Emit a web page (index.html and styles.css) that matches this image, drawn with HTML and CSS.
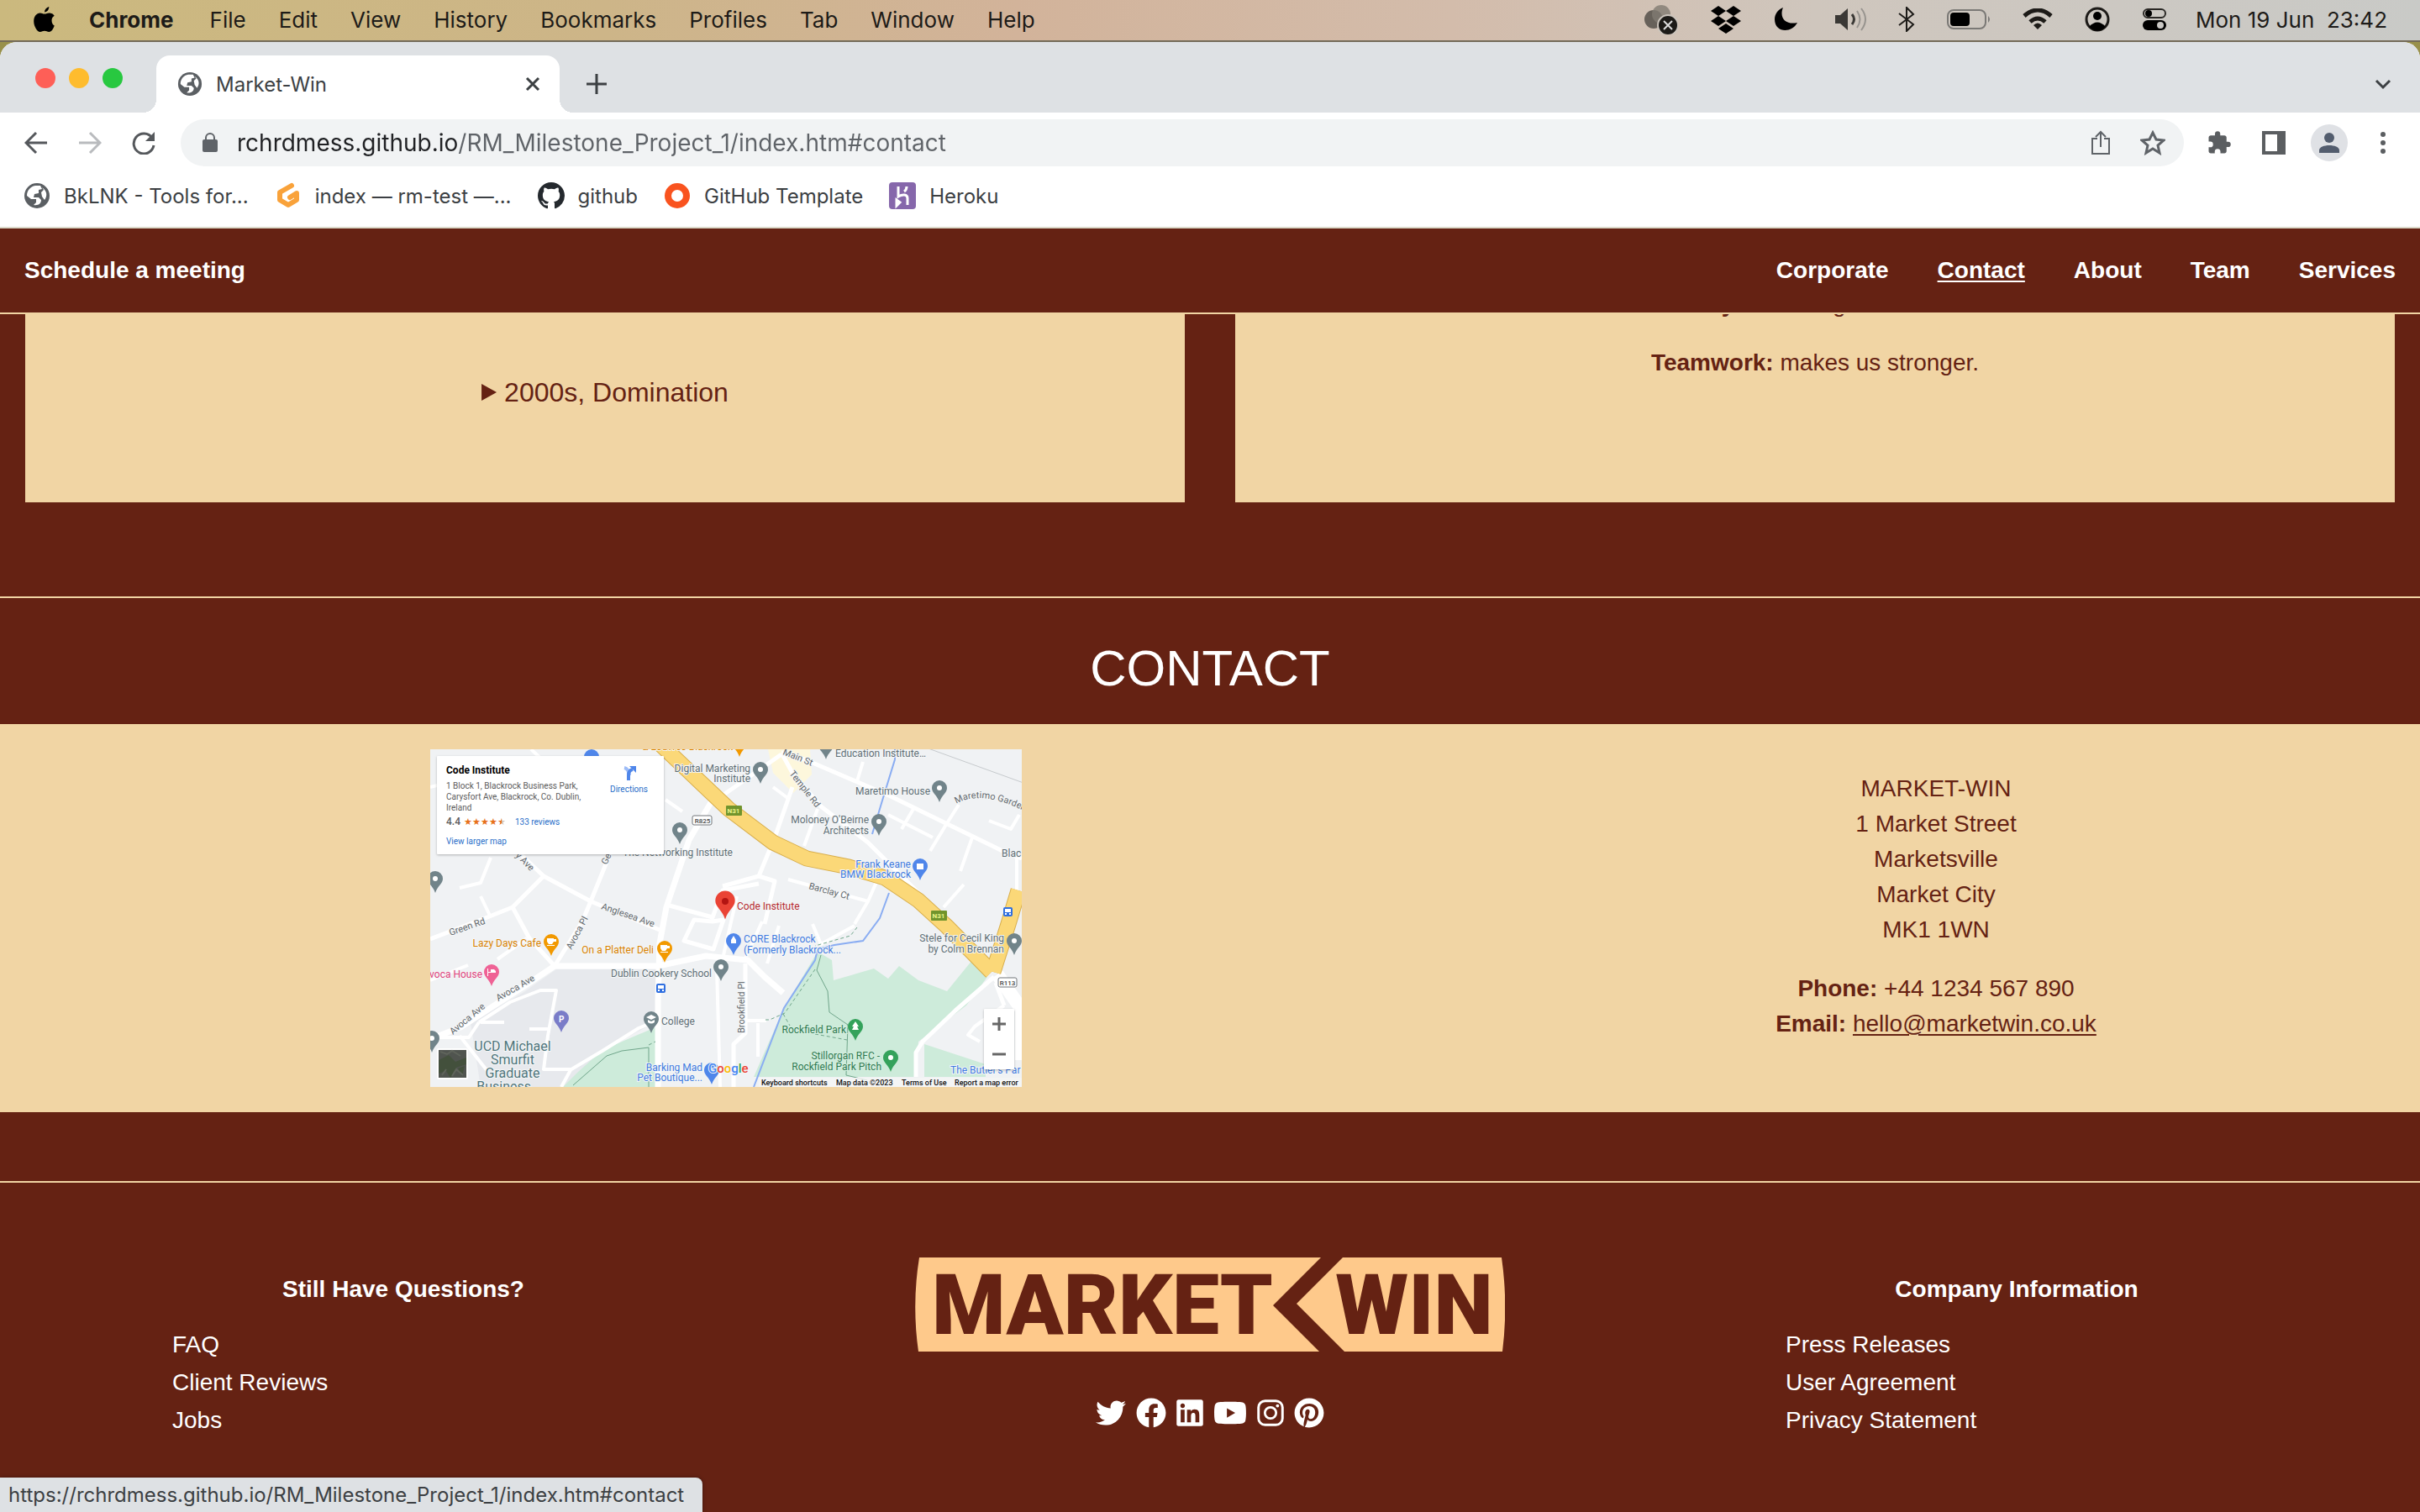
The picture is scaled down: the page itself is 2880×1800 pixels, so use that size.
FILE: index.html
```html
<!DOCTYPE html>
<html lang="en">
<head>
<meta charset="utf-8">
<title>Market-Win</title>
<link rel="stylesheet" href="styles.css">
</head>
<body>
<svg class="defs" aria-hidden="true">
  <symbol id="globe" viewBox="0 0 32 32"><circle cx="16" cy="16" r="15" fill="#5b5f63"/><path d="M14 4C8 5 4 10 4 16l5 4h6v4l-3 3c6 1 9-2 9-6l-3-3h-6l1-4 5-1v-4l4-1-2-4M22 6l2 3-3 3 1 5 3 4c3-4 4-10-3-15" fill="#fff"/></symbol>
  <symbol id="pin" viewBox="0 0 20 28" overflow="visible"><path d="M10 1a9 9 0 0 0-9 9c0 6 6 8 9 17 3-9 9-11 9-17a9 9 0 0 0-9-9z"/></symbol>
</svg>
<div class="desktop">
<header class="menubar">
  <svg class="apple" viewBox="0 0 24 30"><path d="M17 1c0 3-2 6-5 6 0-3 2-5 5-6zM20 16c0-3 2-4 3-5-2-3-5-3-6-3-2 0-3 1-5 1S9 8 7 8c-4 0-7 4-7 9 0 6 4 12 7 12 2 0 3-1 5-1s3 1 5 1c3 0 5-4 6-7-2-1-3-3-3-6z"/></svg>
  <nav class="menus"><b>Chrome</b><span>File</span><span>Edit</span><span>View</span><span>History</span><span>Bookmarks</span><span>Profiles</span><span>Tab</span><span>Window</span><span>Help</span></nav>
  <div class="status">
    <svg viewBox="0 0 40 36" width="40" height="36"><circle cx="11" cy="18" r="11" fill="#67615a"/><circle cx="20" cy="12" r="11" fill="#817a72" opacity=".8"/><circle cx="28" cy="25" r="12" fill="#1d1b18" stroke="#ccc5bd" stroke-width="2"/><path d="m23 20 10 10m0-10L23 30" stroke="#ddd" stroke-width="2"/></svg>
    <svg viewBox="0 0 38 34" width="38" height="34"><path d="m10 1 9 6-9 6-9-6zm18 0 9 6-9 6-9-6zM10 13l9 6-9 6-9-6zm18 0 9 6-9 6-9-6zm-9 9 9 6-9 6-9-6z"/></svg>
    <svg viewBox="0 0 28 28" width="28" height="28"><path d="M11 0C6 12 14 21 28 18 21 31 1 30 1 14 1 8 5 2 11 0z"/></svg>
    <svg class="volume" viewBox="0 0 38 28" width="38" height="28" fill="none" stroke-width="2"><path d="M1 9h6l9-8v26l-9-8H1z" fill="#3a3835"/><path d="M21 8q5 6 0 12" stroke="#3a3835" stroke-width="3"/><path d="M27 4q7 10 0 20M32 1q10 13 0 26" stroke="#98948f"/></svg>
    <svg viewBox="0 0 20 30" width="20" height="30" fill="none" stroke="#1d1b18" stroke-width="2"><path d="m1 8 17 13-8 8V1l8 8L1 22"/></svg>
    <svg viewBox="0 0 52 26" width="52" height="26"><rect x="1" y="2" width="45" height="22" rx="7" fill="none" stroke="#7b7976" stroke-width="2"/><rect x="4" y="5" width="23" height="16" rx="4"/><path d="M49 9q4 4 0 8" fill="#7b7976"/></svg>
    <svg viewBox="0 0 36 26" width="36" height="26" fill="none" stroke="#1d1b18" stroke-width="5"><path d="M2 9Q18-5 34 9M9 16q9-8 18 0"/><path d="m18 25-5-5q5-5 10 0z" fill="#1d1b18" stroke="none"/></svg>
    <svg viewBox="0 0 30 30" width="30" height="30"><circle cx="15" cy="15" r="13" fill="none" stroke="#1d1b18" stroke-width="3"/><circle cx="15" cy="11" r="5"/><path d="M5 24q10-11 20 0-10 9-20 0z"/></svg>
    <svg viewBox="0 0 30 28" width="30" height="28"><rect x="2" y="2" width="26" height="10" rx="5" fill="none" stroke="#2a2825" stroke-width="2"/><circle cx="8" cy="7" r="4"/><rect x="1" y="15" width="28" height="12" rx="6"/><circle cx="22" cy="21" r="4" fill="#cac8c5"/></svg>
    <time>Mon 19 Jun&nbsp; 23:42</time>
  </div>
</header>
<div class="window">
  <div class="tabstrip">
    <div class="lights"><i class="light red"></i><i class="light amber"></i><i class="light green"></i></div>
    <div class="tab"><svg class="fav"><use href="#globe"/></svg><span class="tab-title">Market-Win</span>
      <button class="plain" aria-label="Close tab"><svg width="18" height="18" viewBox="0 0 18 18"><path d="m2 2 14 14m0-14L2 16" stroke="#3c4043" stroke-width="3"/></svg></button></div>
    <button class="plain newtab" aria-label="New tab"><svg width="26" height="26" viewBox="0 0 26 26"><path d="M13 1v24M1 13h24" stroke="#3c4043" stroke-width="3"/></svg></button>
    <button class="plain tabsearch" aria-label="Search tabs"><svg width="20" height="14" viewBox="0 0 20 14"><path d="m2 3 8 8 8-8" fill="none" stroke="#3c4043" stroke-width="3"/></svg></button>
  </div>
  <div class="toolbar">
    <button class="plain" aria-label="Back"><svg width="28" height="28" viewBox="0 0 28 28"><path d="M27 14H2M14 2 2 14l12 12" fill="none" stroke="#55585c" stroke-width="3"/></svg></button>
    <button class="plain" aria-label="Forward"><svg width="28" height="28" viewBox="0 0 28 28"><path d="M1 14h25M14 2l12 12-12 12" fill="none" stroke="#b9bbbe" stroke-width="3"/></svg></button>
    <button class="plain" aria-label="Reload"><svg width="28" height="28" viewBox="0 0 28 28"><path d="M24 8a12 12 0 1 0 2 9" fill="none" stroke="#55585c" stroke-width="3"/><path d="M27 1v11H16z" fill="#55585c"/></svg></button>
    <div class="omnibox">
      <svg width="18" height="24" viewBox="0 0 18 24"><path d="M4 9V6a5 5 0 0 1 10 0v3" fill="none" stroke="#5f6368" stroke-width="2"/><rect y="8" width="18" height="15" rx="2" fill="#5f6368"/></svg>
      <input class="url" aria-label="Address" value="rchrdmess.github.io/RM_Milestone_Project_1/index.htm#contact">
      <button class="plain" aria-label="Share"><svg width="24" height="30" viewBox="0 0 24 30"><path d="M8 10H2v18h20V10h-6M12 20V3M6 8l6-6 6 6" fill="none" stroke="#5f6368" stroke-width="2"/></svg></button>
      <button class="plain" aria-label="Bookmark"><svg width="30" height="30" viewBox="0 0 30 30"><path d="m15 3 4 8 9 1-7 6 2 9-8-5-8 5 2-9-7-6 9-1z" fill="none" stroke="#5f6368" stroke-width="3"/></svg></button>
    </div>
    <button class="plain" aria-label="Extensions"><svg width="30" height="30" viewBox="0 0 24 24"><path d="M20.500 11H19V7c0-1.100-.9-2-2-2h-4V3.500a2.500 2.500 0 0 0-5 0V5H4c-1.100 0-2 .9-2 2v3.800h1.500a2.700 2.700 0 0 1 0 5.400H2V20c0 1.100.9 2 2 2h3.800v-1.500a2.700 2.700 0 0 1 5.400 0V22H17c1.100 0 2-.9 2-2v-4h1.500a2.500 2.500 0 0 0 0-5z" fill="#5b5e61"/></svg></button>
    <button class="plain" aria-label="Side panel"><svg width="28" height="28" viewBox="0 0 28 28"><path d="M0 0h28v28H0zM4 4v20h14V4z" fill="#5b5e61" fill-rule="evenodd"/></svg></button>
    <button class="plain avatar" aria-label="Profile"><svg width="24" height="26" viewBox="0 0 24 26"><circle cx="12" cy="7" r="6" fill="#535d6e"/><path d="M0 25v-3c0-8 24-8 24 0v3z" fill="#535d6e"/></svg></button>
    <button class="plain" aria-label="Menu"><svg width="6" height="28" viewBox="0 0 6 28" fill="#5b5e61"><circle cx="3" cy="4" r="3"/><circle cx="3" cy="14" r="3"/><circle cx="3" cy="24" r="3"/></svg></button>
  </div>
  <nav class="bookmarks">
    <a href="#b1"><svg><use href="#globe"/></svg>BkLNK - Tools for...</a>
    <a href="#b2"><svg viewBox="0 0 32 32"><path d="m20 4-14 8v9l10 6 10-6v-8l-8 5" fill="none" stroke="#f9a23a" stroke-width="6" stroke-linejoin="round" stroke-linecap="round"/></svg>index — rm-test —...</a>
    <a href="#b3"><svg viewBox="0 0 16 16"><path fill="#24292e" d="M8 0C3.580 0 0 3.580 0 8c0 3.540 2.290 6.530 5.470 7.590.4.070.55-.17.55-.38 0-.19-.01-.82-.01-1.490-2.010.37-2.530-.49-2.690-.94-.09-.23-.48-.94-.82-1.130-.28-.15-.68-.52-.01-.53.63-.01 1.080.58 1.230.82.72 1.210 1.870.87 2.330.66.070-.52.28-.87.51-1.070-1.780-.2-3.640-.89-3.640-3.950 0-.87.31-1.590.82-2.150-.08-.2-.36-1.020.08-2.120 0 0 .67-.21 2.200.82a7.600 7.600 0 0 1 4 0c1.530-1.040 2.200-.82 2.200-.82.44 1.100.16 1.920.08 2.120.51.56.82 1.270.82 2.150 0 3.070-1.870 3.750-3.650 3.950.29.25.54.73.54 1.480 0 1.070-.01 1.930-.01 2.200 0 .21.15.46.55.38A8 8 0 0 0 16 8c0-4.420-3.580-8-8-8z"/></svg>github</a>
    <a href="#b4"><svg viewBox="0 0 32 32"><circle cx="16" cy="16" r="11" fill="none" stroke="#f9531f" stroke-width="8"/></svg>GitHub Template</a>
    <a href="#b5"><svg viewBox="0 0 32 32"><rect width="32" height="32" rx="4" fill="#8667ab"/><path d="M11 5v12c5-3 11-3 11 2v8M21 5q0 4-3 6M9 21v7l4-4z" fill="none" stroke="#fff" stroke-width="3"/></svg>Heroku</a>
  </nav>
  <div class="page">
    <header class="site-nav">
      <a href="#meeting">Schedule a meeting</a>
      <nav><a href="#corporate">Corporate</a><a href="#contact" class="active">Contact</a><a href="#about">About</a><a href="#team">Team</a><a href="#services">Services</a></nav>
    </header>
    <section class="cards">
      <div class="card history"><details><summary>2000s, Domination</summary></details></div>
      <div class="card values"><p><b>Honesty:</b> creates great relations.</p><p><b>Teamwork:</b> makes us stronger.</p></div>
    </section>
    <section class="contact" id="contact">
      <h1>CONTACT</h1>
      <div class="contact-body">
        <div class="map">
<svg class="map-canvas" viewBox="0 0 704 402">
<rect width="704" height="402" fill="#f0f2f4"/>
<path d="M402 0h50l2 30-22 22-24-24z" fill="#fdf7dc"/>
<path d="M48 325l62-35 40-28h121l-3 63-63 33-40 44H60z" fill="#e7e9ed"/>
<path d="M461 241l17 10 2 24 48-14 17 12 13-15 23 17 34 13 30-37 18 20-25 34-57 43-3 42H385l36-82zM588 351l73 24v15h-73zM268 331v71H158l17-17 30-27z" fill="#cdebda"/>
<g fill="none" stroke="#fff" stroke-linejoin="round">
<g stroke-width="7"><path d="M336 60 308 108 281 188 273 231 271 298V402M0 345l36-14 85-55 27-18h123l57-12 50 5 20 20 22 19"/><path d="M675 268l29 42v60" stroke-width="16"/></g>
<g stroke-width="5"><path d="M0 226l68-26 30-12 37-37-40-38M135 151l56 30 82 34M215 122l-24 59-10 24-33 53-30-33-20-37M345 57l73-51M418 4l30 9 100 43 133 65 23 9M420 8l11 20 34 40 56 43 60 60M431 45 410 105 391 151 410 157 398 208M391 151l-43 12M281 185l55 15 12-32 43-8M671 271l-46 40-39 37-8 13v29M673 278l10 27M375 255v83l-14 13v51M336 205l-22-2-12 25 35 10 12-35z"/></g>
<g stroke-width="4"><path d="M629 66 615 88 595 121M645 105l-14 40M575 71l-14 24M545 78l53 27M461 71l-16 44M515 15l-7 23M701 78l-10 17-26-10M426 155l95 26 10-23M521 181l-16 27M635 161l-24 27M698 121v47M341 261l4 141M0 275l45-18M80 250l35-25M35 165l25-6 12-30M60 175l12 25M365 175l-16 70M395 205l-20 44M415 210l-14 45M455 208l10 24 40-22M58 325l37-24 36-14h19l-10 54-5 40h33l37-22 43-27 20-8M168 380l-12 22M58 325l-12 18H8M35 341l33 42M118 333h25M60 325h28M375 323h25M390 326v40M683 305l-35 25-8 10 14 8M120 0l16 15M170 15l70 35M0 45l20-5M280 60l20 14M408 45l20 15"/></g>
</g>
<g fill="none"><path d="M274-6 335 52 355 71 408 111 448 130 498 140 541 153 581 180 615 211 668 265M700 168l-12 40-18 57" stroke="#d8ae4c" stroke-width="19"/><path d="M274-6 335 52 355 71 408 111 448 130 498 140 541 153 581 180 615 211 668 265M700 168l-12 40-18 57" stroke="#fbd878" stroke-width="17"/>
<path d="M553 0v12l-15 49-12 40M546 171l-11 30-20 27-34 5-20 5-3 13-37 57-36 94" stroke="#8aadf2" stroke-width="2"/>
<path d="M465 245l-5 18 13 25 2 25 22 15-2 60 25 6M170 400l40-35 18-6 32-4v47" stroke="#6fa58a"/><path d="M508 212l-8 10-42 12M458 262l-36 52-18 8h-8M420 315l8 14M458 339l38 7M260 352l8-4" stroke="#6fa58a" stroke-dasharray="4 3"/><path d="M590-2l116 42" stroke="#c6cacd"/></g>
<g fill="#71848a"><use href="#pin" x="287" y="86" width="20" height="28"/><use href="#pin" x="-4" y="144" width="20" height="28"/><use href="#pin" x="383" y="14" width="20" height="28"/><use href="#pin" x="461" y="-15" width="20" height="28"/><use href="#pin" x="596" y="36" width="20" height="28"/><use href="#pin" x="524" y="76" width="20" height="28"/><use href="#pin" x="336" y="249" width="20" height="28"/><use href="#pin" x="253" y="311" width="20" height="28"/><use href="#pin" x="-8" y="334" width="20" height="28"/><use href="#pin" x="685" y="218" width="20" height="28"/></g>
<g fill="#4f86ea"><use href="#pin" x="573" y="129" width="20" height="28"/><use href="#pin" x="351" y="218" width="20" height="28"/><use href="#pin" x="325" y="372" width="20" height="28"/><circle cx="192" cy="9" r="9"/></g>
<g fill="#f29900"><use href="#pin" x="134" y="219" width="20" height="28"/><use href="#pin" x="269" y="227" width="20" height="28"/><use href="#pin" x="358" y="-18" width="20" height="28"/></g>
<use href="#pin" x="63" y="255" width="20" height="28" fill="#ef6295"/><use href="#pin" x="146" y="310" width="20" height="28" fill="#7a7cc8"/>
<g fill="#34a25b"><use href="#pin" x="496" y="320" width="20" height="28"/><use href="#pin" x="538" y="357" width="20" height="28"/></g>
<use href="#pin" x="338" y="167" width="26" height="37" fill="#ea4335"/><circle cx="351" cy="181" r="4" fill="#b31412"/>
<g fill="#fff"><circle cx="297" cy="96" r="3"/><circle cx="6" cy="154" r="3"/><circle cx="393" cy="24" r="3"/><circle cx="606" cy="46" r="3"/><circle cx="534" cy="86" r="3"/><circle cx="346" cy="259" r="3"/><circle cx="2" cy="344" r="3"/><circle cx="695" cy="228" r="3"/><circle cx="548" cy="367" r="3"/>
<path d="M139 225h8v1h3v3h-3l-2 3h-4l-2-3zM139 233h9v1h-9zM274 233h8v1h3v3h-3l-2 3h-4l-2-3zM274 241h9v1h-9zM68 261h1v5h9v-2l-2-2h-4v3h-3v5h-1zM257 319l6-3 6 3-6 3zM259 322l4 2 4-2v3q-4 3-8 0zM506 324l4 6h-2l2 4h-8l2-4h-2zM579 136h8v7h-8zM358 227l3-5 3 5v4h-6z"/></g>
<text x="153" y="325" class="pin-p">P</text>
<g class="badge-b"><rect x="682" y="188" width="11" height="11" rx="2"/><rect x="269" y="279" width="11" height="11" rx="2"/><path d="M684 190h7v4h-7zM684 195h2v2h-2zM689 195h2v2h-2zM271 281h7v4h-7zM271 286h2v2h-2zM276 286h2v2h-2z" fill="#fff"/></g>
<g fill="#71942c"><rect x="352" y="67" width="19" height="12" rx="1"/><rect x="596" y="192" width="19" height="12" rx="1"/></g>
<g class="n31" text-anchor="middle"><text x="361" y="76">N31</text><text x="605" y="201">N31</text></g>
<g fill="#fff" stroke="#72777b"><rect x="312" y="79" width="23" height="11" rx="2"/><rect x="676" y="272" width="22" height="11" rx="2"/></g>
<g class="route" text-anchor="middle"><text x="324" y="88">R825</text><text x="687" y="281">R113</text></g>
<g class="lbl">
<g class="street"><text transform="translate(419 6) rotate(22)">Main St</text><text transform="translate(427 29) rotate(52)">Temple Rd</text><text transform="translate(203 190) rotate(19)">Anglesea Ave</text><text transform="translate(210 138) rotate(-65)">Ge</text><text transform="translate(101 127) rotate(45)">y Ave</text><text transform="translate(24 222) rotate(-19)">Green Rd</text><text transform="translate(168 239) rotate(-62)">Avoca Pl</text><text transform="translate(81 300) rotate(-30)">Avoca Ave</text><text transform="translate(27 340) rotate(-40)">Avoca Ave</text><text transform="translate(450 166) rotate(15)">Barclay Ct</text><text transform="translate(374 338) rotate(-90)">Brookfield Pl</text><path id="garden" d="M626 65Q656 47 712 76" fill="none"/><text><textPath href="#garden">Maretimo Garden</textPath></text></g>
<g class="gray"><g text-anchor="end"><text x="381" y="27">Digital Marketing</text><text x="381" y="39">Institute</text><text x="595" y="54">Maretimo House</text><text x="522" y="88">Moloney O'Beirne</text><text x="522" y="101">Architects</text><text x="335" y="271">Dublin Cookery School</text><text x="683" y="229">Stele for Cecil King</text><text x="683" y="242">by Colm Brennan</text></g><text x="482" y="9">Education Institute…</text><text x="680" y="128">Blac</text><text x="229" y="127">The Networking Institute</text><text x="275" y="328">College</text></g>
<g class="blue"><text x="572" y="141" text-anchor="end">Frank Keane</text><text x="572" y="153" text-anchor="end">BMW Blackrock</text><text x="373" y="230">CORE Blackrock</text><text x="373" y="243">(Formerly Blackrock...</text><text x="324" y="383" text-anchor="end">Barking Mad</text><text x="324" y="395" text-anchor="end">Pet Boutique...</text><text x="619" y="386">The Butler's Par</text></g>
<g class="orange"><text x="132" y="235" text-anchor="end">Lazy Days Cafe</text><text x="266" y="243" text-anchor="end">On a Platter Deli</text><text x="252" y="1">&amp; Louvres Blackrock</text></g>
<text x="62" y="272" text-anchor="end" fill="#e0437c">Avoca House</text>
<text x="365" y="191" fill="#b5282d">Code Institute</text>
<g class="green" text-anchor="end"><text x="495" y="338">Rockfield Park</text><text x="535" y="369">Stillorgan RFC -</text><text x="537" y="382">Rockfield Park Pitch</text></g>
<g class="ucd" text-anchor="middle"><text x="98" y="359">UCD Michael</text><text x="98" y="375">Smurfit</text><text x="98" y="391">Graduate</text><text x="94" y="407">Business...</text></g>
<text x="331" y="385" class="glogo"><tspan fill="#4285f4">G</tspan><tspan fill="#ea4335">o</tspan><tspan fill="#fbbc05">o</tspan><tspan fill="#4285f4">g</tspan><tspan fill="#34a853">l</tspan><tspan fill="#ea4335">e</tspan></text>
</g>
<path d="M391 391h313v11H391z" fill="#f5f5f5" opacity=".8"/>
<g class="legal"><text x="394" y="400">Keyboard shortcuts</text><text x="483" y="400">Map data ©2023</text><text x="561" y="400">Terms of Use</text><text x="624" y="400">Report a map error</text></g>
<g><rect x="8" y="356" width="37" height="37" rx="2" fill="#fff"/><path d="M10 358h33v33H10z" fill="#50544f"/><path d="M10 370l12-6 8 8 13-5v8l-12 4-7 12-5-8-9 3zM33 380l8-3-3 12z" fill="#43503c"/><path d="M12 360l8 3 6-4 10 6M14 388l5-7M26 389l5-8 8 7" stroke="#5f645b" stroke-width="2" fill="none"/></g>
</svg>
          <div class="place">
            <div class="place-info"><b>Code Institute</b><p>1 Block 1, Blackrock Business Park, Carysfort Ave, Blackrock, Co. Dublin, Ireland</p>
            <div class="rating"><strong>4.4</strong><span class="stars">★★★★<span class="half">★</span></span><a href="#reviews">133 reviews</a></div>
            <a href="#larger">View larger map</a></div>
            <a class="directions" href="#directions"><svg width="18" height="18" viewBox="0 0 18 18"><path d="M3 3q5 1 6 9" stroke="#9dbcf7" stroke-width="4" fill="none"/><path d="M8 18v-6q0-6 5-7" fill="none" stroke="#4f86ea" stroke-width="4"/><path d="M9 1h8v8z" fill="#4f86ea"/></svg>Directions</a>
          </div>
          <div class="zoom"><button aria-label="Zoom in"><svg width="16" height="16" viewBox="0 0 16 16"><path d="M8 0v16M0 8h16" stroke="#666" stroke-width="3"/></svg></button><button aria-label="Zoom out"><svg width="16" height="16" viewBox="0 0 16 16"><path d="M0 8h16" stroke="#666" stroke-width="3"/></svg></button></div>
        </div>
        <address>
          <p>MARKET-WIN<br>1 Market Street<br>Marketsville<br>Market City<br>MK1 1WN</p>
          <p><b>Phone:</b> +44 1234 567 890<br><b>Email:</b> <a href="mailto:hello@marketwin.co.uk">hello@marketwin.co.uk</a></p>
        </address>
      </div>
    </section>
    <footer class="footer">
      <div class="links"><h2>Still Have Questions?</h2><ul><li><a href="#faq">FAQ</a></li><li><a href="#reviews">Client Reviews</a></li><li><a href="#jobs">Jobs</a></li></ul></div>
      <div class="brand">
        <svg class="logo" width="702" height="112" viewBox="0 0 702 112"><path d="M5 0H483L426 57 481 112H4Q-4 56 5 0zM509 0H698Q706 56 699 112H511L454 55z" fill="#fec98b"/><text x="223" y="91" text-anchor="middle">MARKET</text><text x="594" y="91" text-anchor="middle">WIN</text></svg>
        <div class="social">
          <a href="#tw" aria-label="Twitter"><svg width="36" height="36" viewBox="0 0 512 512"><path d="M459.370 151.716c.325 4.548.325 9.097.325 13.645 0 138.720-105.583 298.558-298.558 298.558-59.452 0-114.680-17.219-161.137-47.106 8.447.974 16.568 1.299 25.340 1.299 49.055 0 94.213-16.568 130.274-44.832-46.132-.975-84.792-31.188-98.112-72.772 6.498.974 12.995 1.624 19.818 1.624 9.421 0 18.843-1.300 27.614-3.573-48.081-9.747-84.143-51.980-84.143-102.985v-1.299c13.969 7.797 30.214 12.670 47.431 13.319-28.264-18.843-46.781-51.005-46.781-87.391 0-19.492 5.197-37.360 14.294-52.954 51.655 63.675 129.300 105.258 216.365 109.807-1.624-7.797-2.599-15.918-2.599-24.040 0-57.828 46.782-104.934 104.934-104.934 30.213 0 57.502 12.670 76.670 33.137 23.715-4.548 46.456-13.320 66.599-25.340-7.798 24.366-24.366 44.833-46.132 57.827 21.117-2.273 41.584-8.122 60.426-16.243-14.292 20.791-32.161 39.308-52.628 54.253z"/></svg></a>
          <a href="#fb" aria-label="Facebook"><svg width="36" height="36" viewBox="0 0 512 512"><path d="M504 256C504 119 393 8 256 8S8 119 8 256c0 123.780 90.690 226.380 209.250 245V327.690h-63V256h63v-54.640c0-62.150 37-96.480 93.670-96.480 27.140 0 55.520 4.840 55.520 4.840v61h-31.280c-30.800 0-40.410 19.120-40.410 38.730V256h68.780l-11 71.690h-57.780V501C413.310 482.380 504 379.780 504 256z"/></svg></a>
          <a href="#li" aria-label="LinkedIn"><svg width="32" height="36" viewBox="0 0 448 512"><path d="M416 32H31.900C14.300 32 0 46.500 0 64.300v383.400C0 465.500 14.300 480 31.900 480H416c17.600 0 32-14.500 32-32.300V64.300c0-17.800-14.400-32.300-32-32.300zM135.400 416H69V202.200h66.500V416zm-33.200-243c-21.300 0-38.500-17.300-38.500-38.500S80.900 96 102.200 96c21.200 0 38.500 17.300 38.500 38.500 0 21.300-17.200 38.500-38.500 38.500zm282.100 243h-66.400V312c0-24.800-.5-56.700-34.500-56.700-34.600 0-39.900 27-39.900 54.900V416h-66.400V202.200h63.700v29.200h.9c8.900-16.800 30.600-34.500 62.900-34.500 67.200 0 79.700 44.300 79.700 101.900V416z"/></svg></a>
          <a href="#yt" aria-label="YouTube"><svg width="40" height="36" viewBox="0 0 576 512"><path d="M549.655 124.083c-6.281-23.650-24.787-42.276-48.284-48.597C458.781 64 288 64 288 64S117.220 64 74.629 75.486c-23.497 6.322-42.003 24.947-48.284 48.597-11.412 42.867-11.412 132.305-11.412 132.305s0 89.438 11.412 132.305c6.281 23.650 24.787 41.500 48.284 47.821C117.220 448 288 448 288 448s170.780 0 213.371-11.486c23.497-6.321 42.003-24.171 48.284-47.821 11.412-42.867 11.412-132.305 11.412-132.305s0-89.438-11.412-132.305zm-317.510 213.508V175.185l142.739 81.205-142.739 81.201z"/></svg></a>
          <a href="#ig" aria-label="Instagram"><svg width="32" height="36" viewBox="0 0 448 512"><rect x="21" y="53" width="406" height="406" rx="112" fill="none" stroke="#fff" stroke-width="42"/><circle cx="224" cy="256" r="95" fill="none" stroke="#fff" stroke-width="40"/><circle cx="343" cy="136" r="27"/></svg></a>
          <a href="#pi" aria-label="Pinterest"><svg width="36" height="36" viewBox="0 0 496 512"><path d="M496 256c0 137-111 248-248 248-25.600 0-50.200-3.900-73.400-11.100 10.100-16.500 25.200-43.500 30.800-65 3-11.600 15.400-59 15.400-59 8.100 15.400 31.700 28.500 56.800 28.500 74.800 0 128.700-68.800 128.700-154.300 0-81.900-66.900-143.200-152.900-143.200-107 0-163.900 71.800-163.900 150.100 0 36.400 19.400 81.700 50.300 96.100 4.700 2.200 7.200 1.200 8.300-3.300.8-3.400 5-20.300 6.900-28.100.6-2.500.3-4.700-1.700-7.100-10.100-12.500-18.300-35.300-18.300-56.600 0-54.700 41.400-107.600 112-107.600 60.900 0 103.600 41.500 103.600 100.900 0 67.100-33.900 113.600-78 113.600-24.300 0-42.600-20.100-36.700-44.800 7-29.500 20.500-61.300 20.500-82.600 0-19-10.200-34.900-31.400-34.900-24.900 0-44.900 25.700-44.900 60.200 0 22 7.400 36.800 7.400 36.800s-24.500 103.800-29 123.200c-5 21.400-3 51.600-.9 71.200C65.400 450.900 0 361.100 0 256 0 119 111 8 248 8s248 111 248 248z"/></svg></a>
        </div>
      </div>
      <div class="links"><h2>Company Information</h2><ul><li><a href="#press">Press Releases</a></li><li><a href="#user">User Agreement</a></li><li><a href="#privacy">Privacy Statement</a></li></ul></div>
    </footer>
  </div>
  <div class="link-status">https://rchrdmess.github.io/RM_Milestone_Project_1/index.htm#contact</div>
</div>
</div>
</body>
</html>
```
FILE: styles.css
```css
* { box-sizing: border-box; }
body { margin: 0; font-family: Inter, sans-serif; color: #1d1b18; }
h1, h2, p, ul { margin: 0; padding: 0; }
ul { list-style: none; }
svg { display: block; flex: none; }
a { color: inherit; text-decoration: none; }
.defs { position: absolute; width: 0; height: 0; }
.plain { border: 0; padding: 0; background: none; display: flex; align-items: center; justify-content: center; }

.desktop { height: 100vh; display: flex; flex-direction: column; overflow: hidden; background: #98904a; }
.menubar { height: 50px; flex: none; display: flex; align-items: center; padding: 0 39px 2px; border-bottom: 2px solid #736a58; background: linear-gradient(90deg, #cbb97e 0%, #cdb588 25%, #d2b39a 42%, #d3bcab 60%, #cfc6bd 75%, #c9cac7 100%); font-size: 26px; }
.apple { width: 28px; height: 32px; margin-right: 39px; }
.menus { display: flex; gap: 39px; }
.menus b { margin-right: 4px; }
.status { margin-left: auto; display: flex; align-items: center; gap: 38px; }
.status .volume { margin-left: 6px; }
.status time { margin-left: -4px; }

.window { flex: 1; min-height: 0; display: flex; flex-direction: column; position: relative; border-radius: 20px 20px 0 0; overflow: hidden; background: #fff; }
.tabstrip { height: 84px; flex: none; display: flex; align-items: center; background: #dee1e4; padding: 16px 34px 0 42px; }
.lights { display: flex; gap: 16px; width: 144px; padding-bottom: 14px; }
.light { width: 24px; height: 24px; border-radius: 50%; }
.red { background: #fe5f57; }
.amber { background: #febc2e; }
.green { background: #28c840; }
.tab { position: relative; width: 480px; height: 68px; background: #fff; border-radius: 16px 16px 0 0; display: flex; align-items: center; gap: 16px; padding: 0 23px 0 25px; font-size: 24px; color: #3c4043; }
.tab::before, .tab::after { content: ""; position: absolute; bottom: 0; width: 16px; height: 16px; }
.tab::before { left: -16px; background: radial-gradient(circle at 0 0, transparent 16px, #fff 16px); }
.tab::after { right: -16px; background: radial-gradient(circle at 100% 0, transparent 16px, #fff 16px); }
.fav { width: 30px; height: 30px; }
.tab-title { flex: 1; }
.newtab { margin-left: 31px; }
.tabsearch { margin-left: auto; }

.toolbar { height: 72px; flex: none; display: flex; align-items: center; gap: 36px; padding: 0 41px 0 29px; }
.omnibox { flex: 1; height: 56px; margin-left: -6px; margin-right: -9px; border-radius: 28px; background: #f1f3f4; display: flex; align-items: center; gap: 35px; padding: 0 22px 0 26px; }
.url { flex: 1; border: 0; padding: 0; margin-left: -12px; font: 28px Inter, sans-serif; outline: 0; color: transparent; background: linear-gradient(90deg, #202124 264px, #5f6368 264px); background-clip: text; -webkit-background-clip: text; }
.avatar { width: 44px; height: 44px; border-radius: 50%; background: #dfe1e5; margin: 0 3px 0 -6px; }
.bookmarks { height: 66px; flex: none; display: flex; align-items: center; gap: 31px; padding: 0 28px 10px; border-bottom: 2px solid #dcdacb; font-size: 24px; color: #3c4043; }
.bookmarks a { display: flex; align-items: center; gap: 16px; }
.bookmarks svg { width: 32px; height: 32px; }

.page { flex: 1; min-height: 0; background: #652213; color: #fff; font: 28px/42px "Liberation Sans", sans-serif; overflow: hidden; }
.site-nav { height: 102px; display: flex; align-items: center; justify-content: space-between; padding: 0 29px; border-bottom: 2px solid #f1d5a4; font-weight: bold; }
.site-nav nav { display: flex; gap: 58px; }
.active { text-decoration: underline; text-underline-offset: 3px; text-decoration-thickness: 2px; }
.cards { display: grid; grid-template-columns: 1fr 1fr; gap: 60px; padding: 0 30px; height: 224px; }
.card { background: #f1d5a4; color: #652213; display: flex; flex-direction: column; justify-content: flex-end; align-items: center; overflow: hidden; }
.history { padding-bottom: 107px; font-size: 32px; line-height: 48px; }
.history summary { display: flex; align-items: center; gap: 9px; list-style: none; }
.history summary::before { content: ""; width: 18px; height: 20px; background: #652213; clip-path: polygon(0 0, 100% 50%, 0 100%); }
.values { padding-bottom: 145px; gap: 28px; }
.contact { margin-top: 112px; border-top: 2px solid #f1d5a4; }
.contact h1 { padding: 48px 0 30px; font-size: 60px; line-height: 72px; font-weight: normal; text-align: center; }
.contact-body { display: grid; grid-template-columns: 3fr 2fr; background: #f1d5a4; color: #652213; padding: 30px 0; }
address { font-style: normal; text-align: center; padding-top: 26px; display: flex; flex-direction: column; gap: 28px; }
address a { text-decoration: underline; text-underline-offset: 3px; text-decoration-thickness: 2px; }

.map { position: relative; width: 704px; height: 402px; justify-self: center; overflow: hidden; font-family: Roboto, sans-serif; }
.map-canvas { width: 100%; height: 100%; }
.lbl text { font-size: 12px; paint-order: stroke; stroke: #f4f6f7; stroke-width: 2px; }
.gray { fill: #5f6f76; }
.street { fill: #62686c; }
.lbl .street text { font-size: 11px; }
.blue { fill: #3f7be0; }
.orange { fill: #d98200; }
.green text { fill: #2f7a50; }
.lbl .green text { stroke: #d5efe0; }
.ucd { fill: #4f757c; }
.lbl .ucd text { font-size: 16px; }
.lbl .glogo { font-size: 15px; font-weight: 500; }
.legal { font-size: 9px; font-weight: 500; fill: #111; }
.n31 { font-size: 8px; font-weight: 700; fill: #eaf58a; }
.route { font-size: 8px; font-weight: 500; fill: #444; }
.pin-p { font-size: 10px; font-weight: 700; fill: #fff; }
.badge-b { fill: #2f6fe0; }
.place { position: absolute; left: 8px; top: 8px; width: 270px; height: 117px; padding: 10px 19px 0 11px; display: flex; justify-content: space-between; background: #fff; border-radius: 1px; box-shadow: 0 1px 3px #0004; font-size: 10px; line-height: 13px; color: #5c5c5c; }
.place b { display: block; color: #000; font-size: 12px; line-height: 14px; margin-bottom: 5px; }
.place-info { width: 180px; }
.place a { color: #2a6fc9; }
.rating { display: flex; align-items: center; gap: 4px; margin: 4px 0 10px; }
.rating strong { font-size: 12px; font-weight: 500; }
.stars { color: #e7711b; font-size: 11px; margin-right: 7px; }
.half { background: linear-gradient(90deg, #e7711b 50%, #d0c4ba 50%); background-clip: text; -webkit-background-clip: text; color: transparent; }
.directions { display: flex; flex-direction: column; align-items: center; gap: 4px; padding-top: 1px; }
.zoom { position: absolute; right: 9px; bottom: 21px; width: 36px; height: 72px; background: #fff; border-radius: 1px; box-shadow: 0 1px 3px #0004; display: flex; flex-direction: column; }
.zoom button { flex: 1; border: 0; padding: 0; background: none; display: flex; align-items: center; justify-content: center; }

.footer { margin-top: 82px; border-top: 2px solid #f1d5a4; display: grid; grid-template-columns: 1fr 1fr 1fr; }
.links { padding-top: 106px; }
.links h2 { font-size: 28px; line-height: 42px; text-align: center; margin-bottom: 22px; }
.links ul { padding-left: 205px; }
.links li { line-height: 45px; }
.brand { padding-top: 89px; display: flex; flex-direction: column; align-items: center; gap: 55px; }
.logo text { font-family: Roboto, sans-serif; font-weight: 900; font-size: 100px; fill: #652213; }
.social { display: flex; gap: 12px; fill: #fff; }
.link-status { position: absolute; left: 0; bottom: 0; height: 41px; padding: 0 22px 0 10px; border-radius: 0 8px 0 0; background: #dee1e4; color: #3c4043; font-size: 24px; line-height: 41px; box-shadow: 0 0 4px #0006; }
```
